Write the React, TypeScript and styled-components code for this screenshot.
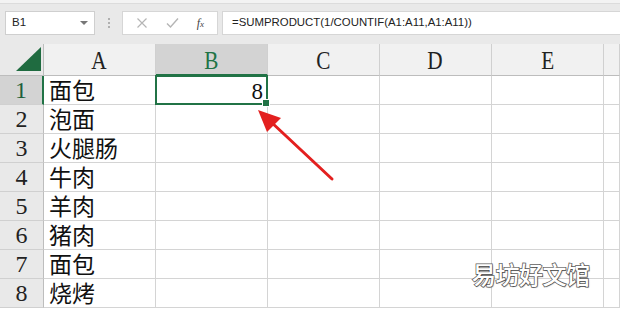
import React from 'react';
import styled, { createGlobalStyle } from 'styled-components';

const GlobalStyle = createGlobalStyle`
  html, body {
    margin: 0;
    padding: 0;
    background: #fff;
    overflow: hidden;
  }
  * {
    box-sizing: border-box;
  }
`;

const COLS = ['A', 'B', 'C', 'D', 'E'];
const ROWS = ['面包', '泡面', '火腿肠', '牛肉', '羊肉', '猪肉', '面包', '烧烤'];
const GREEN = '#217346';

const Root = styled('div')`
  position: relative;
  width: 620px;
  height: 309px;
  overflow: hidden;
  background: #fff;
`;

const Toolbar = styled('div')`
  height: 44px;
  background: #e9e9e9;
  border-top: 3px solid #f3f3f3;
  box-shadow: inset 0 1px 0 #dcdcdc;
  display: flex;
  align-items: flex-start;
  padding: 8px 0 0 5px;
`;

const NameBox = styled('div')`
  width: 90px;
  height: 24px;
  background: #fff;
  border: 1px solid #cfcfcf;
  display: flex;
  align-items: center;
  justify-content: space-between;
  padding: 0 6px 0 6px;
  font: 11.5px/1 'Liberation Sans', Arial, sans-serif;
  color: #222;
`;

const Caret = styled('span')`
  width: 0;
  height: 0;
  border-left: 4px solid transparent;
  border-right: 4px solid transparent;
  border-top: 4px solid #777;
`;

const Grip = styled('div')`
  width: 27px;
  height: 24px;
  display: flex;
  flex-direction: column;
  align-items: center;
  justify-content: center;
  gap: 2px;
  span {
    width: 2px;
    height: 2px;
    background: #b0b0b0;
  }
`;

const ButtonBox = styled('div')`
  width: 96px;
  height: 24px;
  background: #fff;
  border: 1px solid #d6d6d6;
  display: flex;
  align-items: center;
  justify-content: space-around;
  padding: 0 4px;
`;

const Fx = styled('span')`
  font: italic 12px/1 'Liberation Serif', 'Times New Roman', serif;
  color: #444;
  span {
    font-size: 9px;
  }
`;

const FormulaInput = styled('div')`
  flex: 1;
  height: 24px;
  margin-left: 4px;
  background: #fff;
  border: 1px solid #d6d6d6;
  border-right: none;
  display: flex;
  align-items: center;
  padding-left: 9px;
  font: 11.4px/1 'Liberation Sans', Arial, sans-serif;
  color: #222;
`;

const Sheet = styled('div')`
  display: grid;
  grid-template-columns: 44px repeat(5, 112px) 1fr;
  grid-template-rows: 32px repeat(8, 29px);
`;

const Corner = styled('div')`
  background: #e9e9e9;
  border-right: 1px solid #bdbdbd;
  border-bottom: 1px solid #bdbdbd;
  display: flex;
  align-items: flex-end;
  justify-content: flex-end;
  padding: 0 2px 4px 0;
`;

const ColHead = styled('div')<{ $active?: boolean }>`
  background: ${(p) => (p.$active ? '#d3d3d3' : '#f1f1f1')};
  border-right: 1px solid #d0d0d0;
  border-bottom: ${(p) => (p.$active ? `2px solid ${GREEN}` : '1px solid #bdbdbd')};
  display: flex;
  align-items: center;
  justify-content: center;
  padding-top: 2px;
  font: 25px/1 'Liberation Serif', 'Times New Roman', serif;
  color: ${(p) => (p.$active ? GREEN : '#222')};
  span {
    display: inline-block;
    transform: scaleX(0.85);
  }
`;

const RowHead = styled('div')<{ $active?: boolean }>`
  background: ${(p) => (p.$active ? '#d3d3d3' : '#e9e9e9')};
  border-right: ${(p) => (p.$active ? `2px solid ${GREEN}` : '1px solid #bdbdbd')};
  border-bottom: 1px solid #d0d0d0;
  display: flex;
  align-items: center;
  justify-content: center;
  font: 24px/1 'Liberation Serif', 'Times New Roman', serif;
  color: ${(p) => (p.$active ? '#1d5f3b' : '#222')};
`;

const Cell = styled('div')<{ $right?: boolean }>`
  border-right: 1px solid #d4d4d4;
  border-bottom: 1px solid #d4d4d4;
  display: flex;
  align-items: center;
  justify-content: ${(p) => (p.$right ? 'flex-end' : 'flex-start')};
  padding: 3px 5px 0 5px;
  font: 23px/1 'Liberation Serif', 'Noto Sans CJK SC', serif;
  color: #111;
  white-space: nowrap;
`;

const Selected = styled(Cell)`
  position: relative;
  border: 2px solid ${GREEN};
  margin: -1px 0 0 -1px;
  padding-right: 3px;
  &::after {
    content: '';
    position: absolute;
    right: -4px;
    bottom: -4px;
    width: 6px;
    height: 6px;
    background: ${GREEN};
    border: 1px solid #fff;
  }
`;

const Arrow = styled('svg')`
  position: absolute;
  left: 0;
  top: 0;
  pointer-events: none;
`;

const Watermark = styled('div')`
  position: absolute;
  left: 472px;
  top: 262px;
  font: 500 24px/1 'Noto Sans CJK SC', sans-serif;
  letter-spacing: -0.5px;
  color: #fff;
  -webkit-text-stroke: 1.5px #5e5e5e;
  paint-order: stroke fill;
  text-shadow: 1px 1px 1px rgba(0, 0, 0, 0.25);
`;

export default function App() {
  return (
    <Root>
      <GlobalStyle />
      <Toolbar>
        <NameBox>
          B1
          <Caret />
        </NameBox>
        <Grip>
          <span />
          <span />
          <span />
        </Grip>
        <ButtonBox>
          <svg width="12" height="12" viewBox="0 0 12 12">
            <path d="M1.5 1.5 L10.5 10.5 M10.5 1.5 L1.5 10.5" stroke="#b5b5b5" strokeWidth="1.2" />
          </svg>
          <svg width="13" height="12" viewBox="0 0 13 12">
            <path d="M1 6.5 L4.5 10 L12 1.5" stroke="#b5b5b5" strokeWidth="1.4" fill="none" />
          </svg>
          <Fx>
            f<span>x</span>
          </Fx>
        </ButtonBox>
        <FormulaInput>=SUMPRODUCT(1/COUNTIF(A1:A11,A1:A11))</FormulaInput>
      </Toolbar>
      <Sheet>
        <Corner>
          <svg width="25" height="24" viewBox="0 0 25 24">
            <polygon points="0,24 25,24 25,0" fill="#1f6b40" />
          </svg>
        </Corner>
        {COLS.map((c) => (
          <ColHead key={c} $active={c === 'B'}>
            <span>{c}</span>
          </ColHead>
        ))}
        <ColHead />
        {ROWS.map((name, i) => (
          <React.Fragment key={i}>
            <RowHead $active={i === 0}>{i + 1}</RowHead>
            <Cell>{name}</Cell>
            {i === 0 ? <Selected $right>8</Selected> : <Cell />}
            <Cell />
            <Cell />
            <Cell />
            <Cell />
          </React.Fragment>
        ))}
      </Sheet>
      <Arrow width="620" height="309" viewBox="0 0 620 309">
        <line x1="332" y1="179" x2="270" y2="121" stroke="#e3201f" strokeWidth="3" strokeLinecap="round" />
        <polygon points="258,110 281,118 267,132" fill="#e3201f" />
      </Arrow>
      <Watermark>易坊好文馆</Watermark>
    </Root>
  );
}
